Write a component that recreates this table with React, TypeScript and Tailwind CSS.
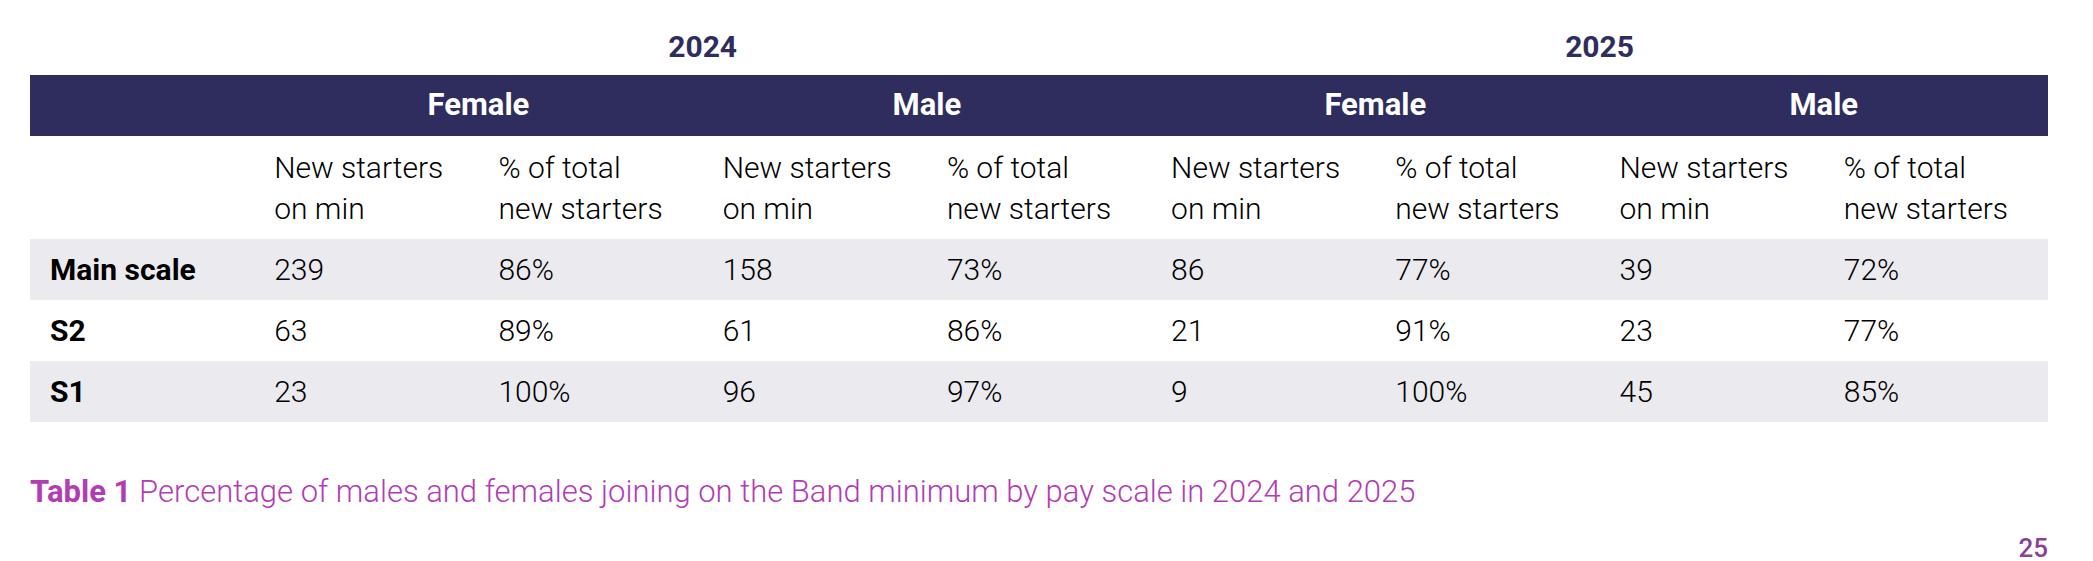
const NAVY = "#2e2d5e";

const ROWS = [
  { label: "Main scale", values: ["239", "86%", "158", "73%", "86", "77%", "39", "72%"], shaded: true },
  { label: "S2", values: ["63", "89%", "61", "86%", "21", "91%", "23", "77%"], shaded: false },
  { label: "S1", values: ["23", "100%", "96", "97%", "9", "100%", "45", "85%"], shaded: true },
];

const SUB = [
  ["New starters", "on min"],
  ["% of total", "new starters"],
];

export default function App() {
  return (
    <div
      className="w-[2093px] h-[561px] bg-white overflow-hidden pl-[30px]"
      style={{ fontFamily: "Roboto, 'Liberation Sans', sans-serif" }}
    >
      <div className="w-[2018px]">
        {/* Year row */}
        <div className="grid grid-cols-9 h-[75px]">
          <div />
          <div className="col-span-4 flex items-end justify-center pb-[10px] text-[30px] leading-[36px] font-bold text-[#2e2d5e]">
            2024
          </div>
          <div className="col-span-4 flex items-end justify-center pb-[10px] text-[30px] leading-[36px] font-bold text-[#2e2d5e]">
            2025
          </div>
        </div>

        {/* Gender header */}
        <div className="grid grid-cols-9 h-[61px] text-white" style={{ background: NAVY }}>
          <div />
          {["Female", "Male", "Female", "Male"].map((g, i) => (
            <div key={i} className="col-span-2 flex items-center justify-center text-[31px] font-bold">
              {g}
            </div>
          ))}
        </div>

        {/* Sub header */}
        <div className="grid grid-cols-9 h-[103px] items-center text-[30px] leading-[41px] font-light text-black">
          <div />
          {[0, 1, 2, 3].map((i) =>
            SUB.map((s, j) => (
              <div key={`${i}-${j}`} className="px-5 whitespace-nowrap">
                {s[0]}
                <br />
                {s[1]}
              </div>
            ))
          )}
        </div>

        {/* Data rows */}
        {ROWS.map((r) => (
          <div
            key={r.label}
            className={`grid grid-cols-9 h-[61px] items-center text-[30px] text-black ${r.shaded ? "bg-[#ebeaef]" : "bg-white"}`}
          >
            <div className="px-5 font-bold">{r.label}</div>
            {r.values.map((v, i) => (
              <div key={i} className="px-5 font-light">
                {v}
              </div>
            ))}
          </div>
        ))}

        {/* Caption */}
        <div className="mt-[51px] text-[31px] leading-[38px] text-[#b23cb4]">
          <span className="font-bold">Table 1</span>{" "}
          <span className="font-light">
            Percentage of males and females joining on the Band minimum by pay scale in 2024 and 2025
          </span>
        </div>

        <div className="mt-[22px] flex justify-end text-[26px] leading-[30px] font-medium text-[#8b3f9a]">
          25
        </div>
      </div>
    </div>
  );
}
